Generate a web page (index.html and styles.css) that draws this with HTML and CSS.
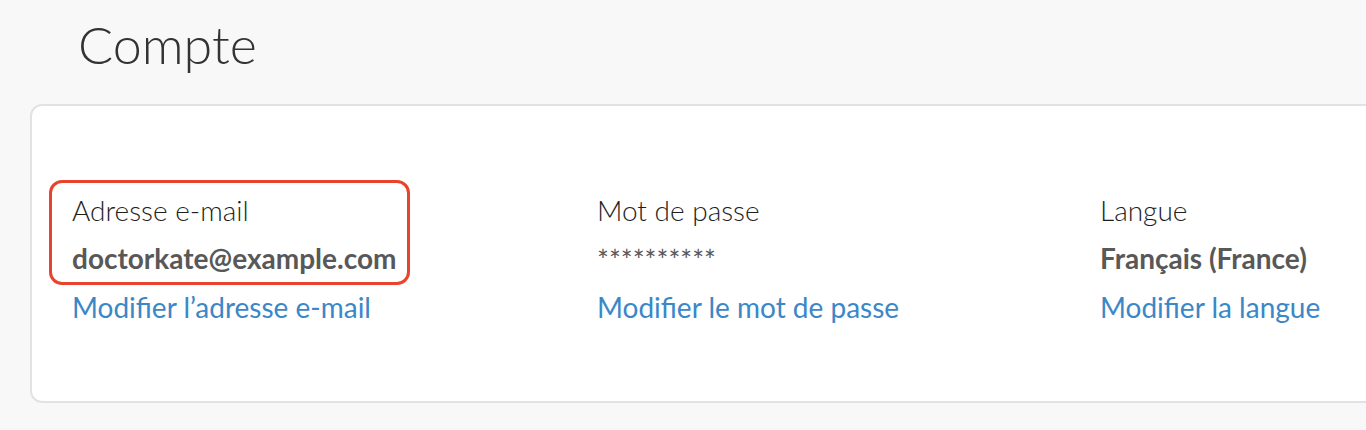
FILE: index.html
```html
<!DOCTYPE html>
<html lang="fr">
<head>
<meta charset="utf-8">
<title>Compte</title>
<link rel="stylesheet" href="styles.css">
</head>
<body>
<main class="page">
  <h1 class="page-title">Compte</h1>
  <section class="card">
    <div class="field">
      <div class="field-main">
        <span class="highlight" aria-hidden="true"></span>
        <div class="field-label">Adresse e-mail</div>
        <div class="field-value">doctorkate@example.com</div>
      </div>
      <a class="field-link" href="#">Modifier l’adresse e-mail</a>
    </div>
    <div class="field">
      <div class="field-main">
        <div class="field-label">Mot de passe</div>
        <div class="field-value field-value--secret">**********</div>
      </div>
      <a class="field-link" href="#">Modifier le mot de passe</a>
    </div>
    <div class="field">
      <div class="field-main">
        <div class="field-label">Langue</div>
        <div class="field-value">Français (France)</div>
      </div>
      <a class="field-link" href="#">Modifier la langue</a>
    </div>
  </section>
</main>
</body>
</html>
```

FILE: styles.css
```css
html, body {
  margin: 0;
  padding: 0;
}

body {
  background: #f8f8f8;
  font-family: Lato, "Open Sans", "Liberation Sans", sans-serif;
  color: #222;
  overflow: hidden;
}

.page {
  padding-top: 13px;
}

.page-title {
  margin: 0 0 29px 78px;
  font-size: 52px;
  font-weight: 300;
  line-height: 62px;
  color: #333;
}

.card {
  box-sizing: border-box;
  margin-left: 30px;
  width: 1400px;
  background: #fff;
  border: 2px solid #e2e2e2;
  border-radius: 12px;
  padding: 87px 0 77px 40px;
  display: grid;
  grid-template-columns: 525px 503px 1fr;
}

.field {
  display: flex;
  flex-direction: column;
}

.field-main {
  position: relative;
  display: flex;
  flex-direction: column;
  gap: 14px;
}

.highlight {
  position: absolute;
  left: -23px;
  top: -13px;
  width: 361px;
  height: 105px;
  box-sizing: border-box;
  border: 3px solid #e8432e;
  border-radius: 13px;
}

.field-label {
  font-size: 28px;
  line-height: 34px;
  font-weight: 300;
  color: #1e1e1e;
}

.field-value {
  font-size: 28px;
  line-height: 34px;
  font-weight: 700;
  color: #585858;
}

.field-value--secret {
  font-weight: 400;
  padding-top: 2px;
  margin-bottom: -2px;
}

.field-link {
  margin-top: 15px;
  font-size: 28px;
  line-height: 34px;
  color: #3b87c8;
  text-decoration: none;
}
```
